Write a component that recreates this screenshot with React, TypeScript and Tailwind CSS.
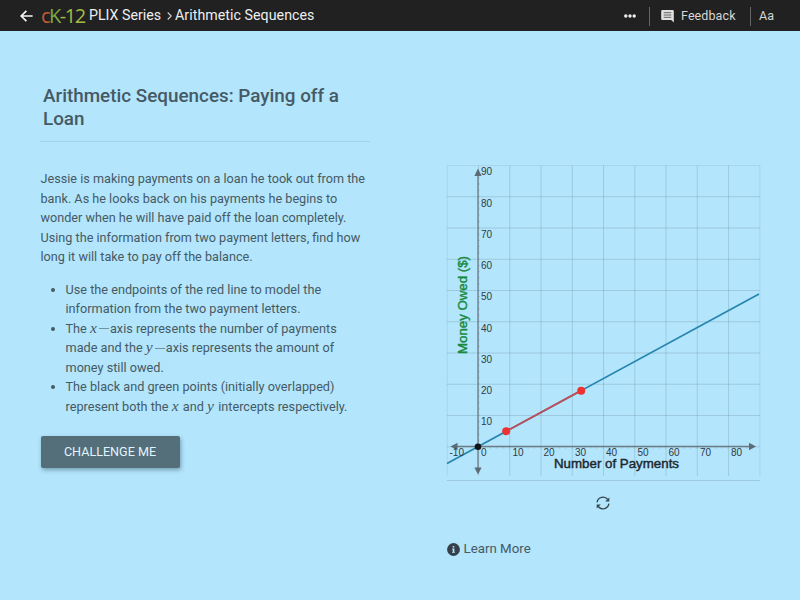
import type { ReactNode } from "react";

const STEP = 31.25;
const ORIGIN = { x: 31, y: 281.5 };

const steps = Array.from({ length: 11 }, (_, i) => i);
const yLabels = [90, 80, 70, 60, 50, 40, 30, 20, 10];
const xLabels = [
  { value: "-10", x: 2.5 },
  { value: "0", x: 34 },
  { value: "10", x: 65.5 },
  { value: "20", x: 96.5 },
  { value: "30", x: 128 },
  { value: "40", x: 159 },
  { value: "50", x: 190.5 },
  { value: "60", x: 221.5 },
  { value: "70", x: 253 },
  { value: "80", x: 284 },
];

function MathVar({ children }: { children: ReactNode }) {
  return (
    <span className="inline-block w-[8px] font-['Liberation_Serif',serif] text-[15.5px] leading-none italic">
      {children}
    </span>
  );
}

function Minus() {
  return <span className="mx-[1px] inline-block h-px w-[10px] bg-[#455a64]/60 align-[3.5px]" />;
}

function BackIcon() {
  return (
    <svg width="13" height="12" viewBox="0 0 13 12" fill="none" stroke="#f5f5f5" strokeWidth="1.7">
      <path d="M12.6 6H1.4M6.4 .8 1.2 6l5.2 5.2" />
    </svg>
  );
}

function FeedbackIcon() {
  return (
    <svg width="13" height="13" viewBox="0 0 13 13">
      <path d="M1.3 0h10.4q1.1 0 1.1 1.2V12.6L10.2 10H1.3Q.2 10 .2 8.9V1.2Q.2 0 1.3 0z" fill="#e0e0e0" />
      <path d="M2.7 2.7h7.6M2.7 5h7.6M2.7 7.3h7.6" stroke="#616161" strokeWidth="1" />
    </svg>
  );
}

function RefreshIcon() {
  return (
    <svg width="14" height="14" viewBox="0 0 14 14" fill="none">
      <path d="M1.1 6.3A6 6 0 0 1 11.8 3.5M12.9 7.7A6 6 0 0 1 2.2 10.5" stroke="#37474f" strokeWidth="1.3" />
      <path d="M13.3 1.5V5.6H9.2zM.7 12.5V8.4H4.8z" fill="#37474f" />
    </svg>
  );
}

function InfoIcon() {
  return (
    <svg width="13" height="13" viewBox="0 0 13 13">
      <circle cx="6.5" cy="6.5" r="6.4" fill="#37404a" />
      <path d="M5.7 3h1.6v1.5H5.7zM5.1 5.5h2.3v3.4h.6v.9H5v-.9h.7V6.4h-.6z" fill="#b3e5fc" />
    </svg>
  );
}

function Header() {
  return (
    <header className="flex h-[31px] items-center bg-[#212121] pl-[20px] text-[14.2px] font-[450] text-[#eeeeee]">
      <BackIcon />
      <span className="ml-[8px] flex w-[48px] font-['Open_Sans',sans-serif] text-[20px] leading-none font-normal tracking-[-1.5px]">
        <span className="text-[#c75b32]">c</span>
        <span className="text-[#7cab43]">K</span>
        <span className="text-[#a3ba44]">-12</span>
      </span>
      <span>PLIX Series</span>
      <svg className="mr-[3px] ml-[6px]" width="5" height="8" viewBox="0 0 5 8" fill="none" stroke="#d0d0d0" strokeWidth="1.1">
        <path d="M.7 .5 4.2 4 .7 7.5" />
      </svg>
      <span className="tracking-[0.05px]">Arithmetic Sequences</span>
      <div className="ml-auto flex items-center pt-px text-[12.5px] text-[#d6d6d6]">
        <svg width="12" height="4" viewBox="0 0 12 4" fill="#eeeeee">
          <circle cx="1.8" cy="2" r="1.7" />
          <circle cx="6" cy="2" r="1.7" />
          <circle cx="10.2" cy="2" r="1.7" />
        </svg>
        <span className="mr-[11px] ml-[13px] h-[19px] w-px bg-[#666666]" />
        <FeedbackIcon />
        <span className="ml-[7px] w-[69px] tracking-[0.1px]">Feedback</span>
        <span className="mr-[8px] h-[19px] w-px bg-[#666666]" />
        <span className="w-[41px]">Aa</span>
      </div>
    </header>
  );
}

function Graph() {
  return (
    <svg width="314" height="318" viewBox="0 0 314 318" className="block overflow-visible">
      <g stroke="#546e7a" strokeWidth="1">
        {steps.map((i) => (
          <path key={`v${i}`} d={`M${i * STEP + 0.3} 0.5V311`} strokeOpacity={i === 0 || i === 10 ? 0.12 : 0.22} />
        ))}
        {steps.slice(0, 10).map((i) => (
          <path key={`h${i}`} d={`M0 ${i * STEP + 0.5}H313`} strokeOpacity={i === 0 ? 0.12 : 0.22} />
        ))}
        <path d="M0 315.5H313" strokeOpacity="0.22" />
      </g>

      <g stroke="#78909c" strokeWidth="0.6" strokeOpacity="0.5">
        {Array.from({ length: 44 }, (_, i) => (
          <path key={i} d={`M${ORIGIN.x + i * 6.25} ${ORIGIN.y}v2.5M${ORIGIN.x} ${ORIGIN.y - i * 6.25}h2`} />
        ))}
      </g>

      <path d="M31 6V306M6 281.5H306" stroke="#6c7b85" strokeWidth="1.3" />
      <path d="M31 3.5l3.6 7.5h-7.2zM31 309.5l3.6-7h-7.2zM309 281.5l-7-3.7v7.4zM3.5 281.5l7-3.7v7.4z" fill="#5c6b75" />

      <path d="M0 298.5 312 129" stroke="#2585ae" strokeWidth="1.7" />
      <path d="M59 266.3 134 225.7" stroke="#c04e59" strokeWidth="1.9" />
      <circle cx="31" cy="281.8" r="3.3" fill="#111417" />
      <circle cx="59.2" cy="266.2" r="4" fill="#ee3131" />
      <circle cx="134.2" cy="225.7" r="4" fill="#ee3131" />

      <g fontFamily="Liberation Sans, sans-serif" fontSize="10" fill="#303b43">
        {yLabels.map((value, i) => (
          <text key={value} x="34" y={10.4 + i * STEP}>{value}</text>
        ))}
        {xLabels.map((label) => (
          <text key={label.value} x={label.x} y="291">{label.value}</text>
        ))}
      </g>
      <g fontFamily="Liberation Sans, sans-serif" fontSize="12.2" strokeWidth="0.4">
        <text x="107" y="303.3" textLength="125" lengthAdjust="spacingAndGlyphs" fill="#20272c" stroke="#20272c">
          Number of Payments
        </text>
        <text
          transform="translate(20.3 189) rotate(-90)"
          textLength="98"
          lengthAdjust="spacingAndGlyphs"
          fill="#188a3c"
          stroke="#188a3c"
        >
          Money Owed ($)
        </text>
      </g>
    </svg>
  );
}

export default function App() {
  return (
    <div className="h-[600px] w-[800px] overflow-hidden bg-[#b3e5fc] font-['Roboto',sans-serif] text-[#455a64]">
      <Header />
      <main className="flex items-start">
        <section className="ml-[40px] w-[330px] pt-[54px] whitespace-nowrap">
          <h1 className="h-[57px] border-b border-[#9fd3e6] pl-[3px] text-[18.85px] leading-[23px] font-medium">
            Arithmetic Sequences: Paying off a<br />Loan
          </h1>
          <p className="mt-[27.4px] pl-[0.5px] text-[12.67px] leading-[19.5px] font-[430]">
            Jessie is making payments on a loan he took out from the<br />
            bank. As he looks back on his payments he begins to<br />
            wonder when he will have paid off the loan completely.<br />
            Using the information from two payment letters, find how<br />
            long it will take to pay off the balance.
          </p>
          <ul className="mt-[13.1px] list-disc pl-[25.5px] text-[12.7px] leading-[19.5px] font-[430]">
            <li>
              Use the endpoints of the red line to model the<br />
              information from the two payment letters.
            </li>
            <li>
              The <MathVar>x</MathVar><Minus />axis represents the number of payments<br />
              made and the <MathVar>y</MathVar><Minus />axis represents the amount of<br />
              money still owed.
            </li>
            <li>
              The black and green points (initially overlapped)<br />
              represent both the <MathVar>x</MathVar> and <MathVar>y</MathVar> intercepts respectively.
            </li>
          </ul>
          <button className="mt-[20px] ml-[0.5px] h-[32px] w-[139px] rounded-[2px] bg-[#546e7a] text-[12.6px] text-[#e1f5fe] shadow-[1px_2px_4px_rgba(40,70,85,0.45)]">
            CHALLENGE ME
          </button>
        </section>

        <section className="ml-[77px] flex w-[313px] flex-col pt-[134px]">
          <Graph />
          <button className="mt-[13px] mr-[2px] self-center">
            <RefreshIcon />
          </button>
          <a className="mt-[30px] flex items-center gap-[3.5px] text-[13.3px] leading-[18px]">
            <InfoIcon />
            Learn More
          </a>
        </section>
      </main>
    </div>
  );
}
